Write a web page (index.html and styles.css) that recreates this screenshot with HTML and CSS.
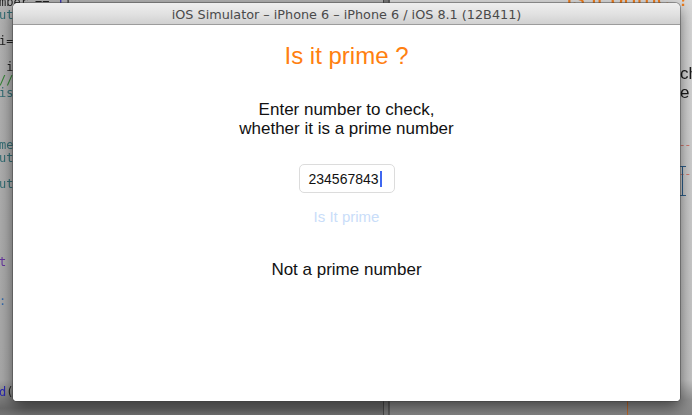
FILE: index.html
```html
<!DOCTYPE html>
<html lang="en">
<head>
<meta charset="utf-8">
<title>iOS Simulator – Is it prime ?</title>
<link rel="stylesheet" href="styles.css">
</head>
<body>
<div class="desktop">
  <div class="xcode-left">
<pre class="code"><span class="k">mber == </span><span class="n">1</span><span class="k">)</span>
<span class="t">ut_</span>

<span class="k">i=</span><span class="n">2</span>

<span class="k"> ir</span>
<span class="c">//</span>
<span class="t">isP</span>



<span class="t">me</span>
<span class="t">ut_</span>

<span class="t">ut_</span>





<span class="p">t</span><span class="k"> =</span>


<span class="b">:</span>






<span class="n">d</span><span class="k">()</span></pre>
  </div>
  <div class="split-line"></div>
  <div class="xcode-right">
    <div class="sb-title">Is it prime ?</div>
    <div class="sb-text sb-line1">check,</div>
    <div class="sb-text sb-line2">e n</div>
    <div class="sb-dash sb-dash1"></div>
    <div class="sb-dash sb-dash2"></div>
    <div class="sb-ibeam"></div>
    <div class="sb-guide"></div>
  </div>

  <div class="sim-window">
    <div class="titlebar">iOS Simulator – iPhone 6 – iPhone 6 / iOS 8.1 (12B411)</div>
    <div class="screen">
      <h1 class="app-title">Is it prime ?</h1>
      <p class="prompt">Enter number to check,<br>whether it is a prime number</p>
      <div class="field"><span class="field-value">234567843</span><span class="caret"></span></div>
      <button class="check-btn" type="button">Is It prime</button>
      <p class="result">Not a prime number</p>
    </div>
  </div>
</div>
</body>
</html>
```
FILE: styles.css
```css
html, body {
  margin: 0;
  padding: 0;
}

body {
  width: 692px;
  height: 415px;
  overflow: hidden;
  font-family: "Liberation Sans", Arial, sans-serif;
  background: #8a8a8a;
}

.desktop {
  position: relative;
  width: 692px;
  height: 415px;
  overflow: hidden;
}

/* ---------- blurred Xcode behind the simulator ---------- */
.xcode-left {
  position: absolute;
  left: 0;
  top: 0;
  width: 385px;
  height: 415px;
  background: linear-gradient(180deg, #b3b3b3 0, #a9a9a9 380px, #7c7c7c 399px, #6a6a6a 408px, #747474 415px);
}

.code {
  margin: 0;
  position: absolute;
  left: -1px;
  top: -4px;
  font-family: "DejaVu Sans Mono", "Liberation Mono", monospace;
  font-size: 12px;
  line-height: 13px;
  color: #2c2c2c;
  filter: blur(0.3px);
}

.code .k { color: #222222; }
.code .n { color: #2a27b0; }
.code .t { color: #336d74; }
.code .c { color: #348434; }
.code .p { color: #66359e; }
.code .b { color: #3569aa; }

.split-line {
  position: absolute;
  left: 383px;
  top: 0;
  width: 4px;
  height: 415px;
  border-left: 1px solid #4a4a4a;
  border-right: 1px solid #5a5a5a;
  background: #7a7a7a;
}

.xcode-right {
  position: absolute;
  left: 389px;
  top: 0;
  width: 303px;
  height: 415px;
  border-left: 1px solid #5e5e5e;
  background: linear-gradient(180deg, #dadada 0, #cdcdcd 200px, #c4c4c4 380px, #909090 400px, #888888 415px);
}

.sb-title {
  position: absolute;
  left: 176px;
  top: -16px;
  font-size: 24px;
  line-height: 28px;
  color: #f07d1c;
  white-space: nowrap;
  filter: blur(0.3px);
}

.sb-text {
  position: absolute;
  font-size: 17px;
  line-height: 19px;
  color: #1a1a1a;
  white-space: nowrap;
  filter: blur(0.3px);
}

.sb-line1 { left: 290px; top: 64px; }
.sb-line2 { left: 290px; top: 83px; }

.sb-dash {
  position: absolute;
  left: 285px;
  width: 20px;
  height: 0;
  border-top: 1px dashed #d0766c;
}

.sb-dash1 { top: 145px; }
.sb-dash2 { top: 174px; }

.sb-ibeam {
  position: absolute;
  left: 290px;
  top: 166px;
  width: 6px;
  height: 30px;
  box-sizing: border-box;
  border-top: 1px solid #2d5f8c;
  border-bottom: 1px solid #2d5f8c;
  background: linear-gradient(90deg, transparent 2px, #2d5f8c 2px, #2d5f8c 3px, transparent 3px);
}

.sb-guide {
  position: absolute;
  left: 237px;
  top: 395px;
  width: 1px;
  height: 20px;
  background: #c0692a;
}

/* ---------- simulator window ---------- */
.sim-window {
  position: absolute;
  left: 13px;
  top: 3px;
  width: 667px;
  height: 398px;
  z-index: 2;
  display: flex;
  flex-direction: column;
  background: #ffffff;
  border-radius: 5px 5px 4px 4px;
  box-shadow: 0 0 0 1px rgba(60, 60, 60, 0.45), 0 6px 16px rgba(0, 0, 0, 0.55);
  overflow: hidden;
}

.titlebar {
  height: 22px;
  flex: 0 0 22px;
  box-sizing: border-box;
  display: flex;
  align-items: center;
  justify-content: center;
  background: linear-gradient(180deg, #eeeeee 0, #e2e2e2 50%, #d1d1d1 100%);
  border-bottom: 1px solid #9c9c9c;
  font-family: "DejaVu Sans", "Liberation Sans", sans-serif;
  font-size: 12.8px;
  color: #4a4a4a;
  white-space: nowrap;
  padding-top: 1px;
}

.screen {
  flex: 1;
  display: flex;
  flex-direction: column;
  align-items: center;
  padding-top: 17px;
  background: #ffffff;
}

.app-title {
  margin: 0;
  font-size: 24px;
  line-height: 28px;
  font-weight: normal;
  color: #ff8010;
}

.prompt {
  margin: 30px 0 0;
  font-size: 17px;
  line-height: 19px;
  color: #111111;
  text-align: center;
}

.field {
  margin-top: 26px;
  width: 96px;
  height: 29px;
  box-sizing: border-box;
  border: 1px solid #dcdcdc;
  border-radius: 5px;
  display: flex;
  align-items: center;
  padding-left: 9px;
  padding-top: 1px;
}

.field-value {
  font-size: 14px;
  line-height: 16px;
  color: #111111;
}

.caret {
  display: inline-block;
  width: 2px;
  height: 16px;
  margin-left: 1px;
  background: #3f67f0;
}

.check-btn {
  margin-top: 15px;
  padding: 0;
  border: 0;
  background: none;
  font-family: "Liberation Sans", Arial, sans-serif;
  font-size: 15px;
  line-height: 18px;
  color: #c9ddf9;
}

.result {
  margin: 34px 0 0;
  font-size: 17px;
  line-height: 20px;
  color: #111111;
}
```
